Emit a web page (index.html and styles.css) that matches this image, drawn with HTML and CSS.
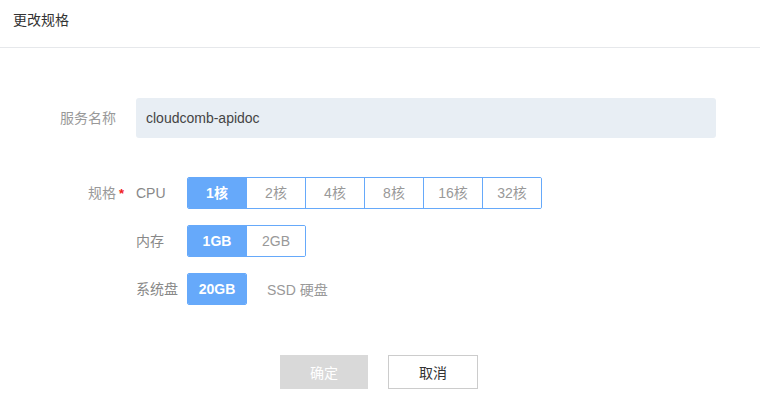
FILE: index.html
```html
<!DOCTYPE html>
<html lang="zh-CN">
<head>
<meta charset="utf-8">
<title>更改规格</title>
<link rel="stylesheet" href="styles.css">
</head>
<body>
<div class="header">更改规格</div>
<div class="form">
  <div class="row">
    <div class="label">服务名称</div>
    <div class="input">cloudcomb-apidoc</div>
  </div>
  <div class="row spec">
    <div class="label required">规格</div>
    <div class="subrows">
      <div class="subrow">
        <div class="sublabel">CPU</div>
        <div class="group">
          <span class="opt on">1核</span><span class="opt">2核</span><span class="opt">4核</span><span class="opt">8核</span><span class="opt">16核</span><span class="opt">32核</span>
        </div>
      </div>
      <div class="subrow">
        <div class="sublabel">内存</div>
        <div class="group">
          <span class="opt on">1GB</span><span class="opt">2GB</span>
        </div>
      </div>
      <div class="subrow">
        <div class="sublabel">系统盘</div>
        <div class="group single">
          <span class="opt on">20GB</span>
        </div>
        <div class="note">SSD 硬盘</div>
      </div>
    </div>
  </div>
</div>
<div class="footer">
  <button class="btn ok">确定</button>
  <button class="btn cancel">取消</button>
</div>
</body>
</html>
```
FILE: styles.css
```css
* { box-sizing: border-box; }
body {
  margin: 0;
  font-family: "Liberation Sans", "Noto Sans CJK SC", sans-serif;
  font-size: 14px;
  color: #333;
  background: #fff;
}
.header {
  padding: 12px 13px 19px;
  line-height: 16px;
  color: #333;
  border-bottom: 1px solid #e6e8eb;
}
.form {
  padding-top: 50px;
}
.row {
  display: flex;
  align-items: center;
}
.label {
  width: 116px;
  margin-right: 20px;
  text-align: right;
  color: #999;
  line-height: 32px;
  position: relative;
}
.required::after {
  content: "*";
  position: absolute;
  left: 100%;
  top: 1px;
  margin-left: 3px;
  color: #f02020;
  font-weight: bold;
  font-size: 13px;
}
.input {
  width: 580px;
  height: 40px;
  line-height: 40px;
  padding-left: 10px;
  background: #e8eef4;
  border-radius: 3px;
  color: #444;
}
.spec {
  margin-top: 39px;
  align-items: flex-start;
}
.subrows {
  display: flex;
  flex-direction: column;
  gap: 16px;
}
.subrow {
  display: flex;
  align-items: center;
}
.sublabel {
  width: 51px;
  color: #888;
  line-height: 32px;
}
.group {
  display: flex;
  border: 1px solid #66a9fa;
  border-radius: 2px;
  overflow: hidden;
}
.opt {
  width: 58px;
  height: 30px;
  line-height: 30px;
  text-align: center;
  color: #999;
  background: #fff;
}
.opt + .opt {
  width: 59px;
  border-left: 1px solid #66a9fa;
}
.opt.on {
  background: #66a9fa;
  color: #fff;
  font-weight: bold;
}
.note {
  margin-left: 20px;
  color: #999;
}
.footer {
  display: flex;
  justify-content: center;
  gap: 20px;
  margin-top: 50px;
  padding-right: 2px;
}
.btn {
  height: 34px;
  font-family: inherit;
  font-size: 14px;
  border-radius: 0;
  padding: 0;
}
.ok {
  width: 88px;
  background: #d9d9d9;
  color: #fff;
  border: none;
}
.cancel {
  width: 90px;
  background: #fff;
  color: #333;
  border: 1px solid #cccccc;
}
```
